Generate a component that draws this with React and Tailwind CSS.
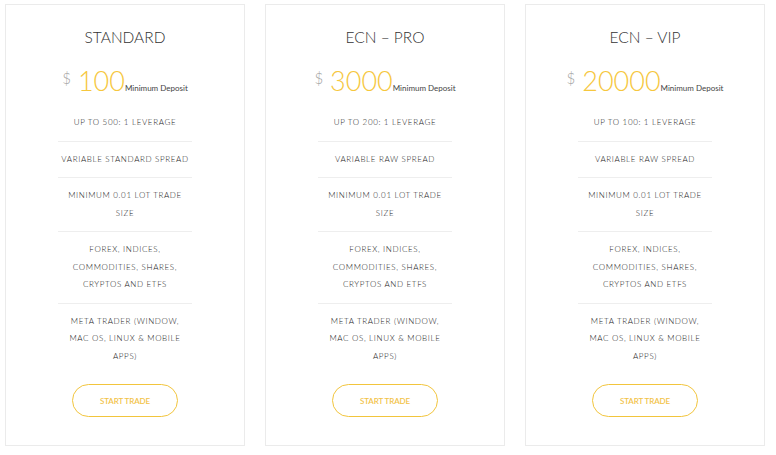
import React from "react";

const plans = [
  {
    name: "STANDARD",
    amount: "100",
    features: [
      ["UP TO 500: 1 LEVERAGE"],
      ["VARIABLE STANDARD SPREAD"],
      ["MINIMUM 0.01 LOT TRADE", "SIZE"],
      ["FOREX, INDICES,", "COMMODITIES, SHARES,", "CRYPTOS AND ETFS"],
      ["META TRADER (WINDOW,", "MAC OS, LINUX & MOBILE", "APPS)"],
    ],
  },
  {
    name: "ECN – PRO",
    amount: "3000",
    features: [
      ["UP TO 200: 1 LEVERAGE"],
      ["VARIABLE RAW SPREAD"],
      ["MINIMUM 0.01 LOT TRADE", "SIZE"],
      ["FOREX, INDICES,", "COMMODITIES, SHARES,", "CRYPTOS AND ETFS"],
      ["META TRADER (WINDOW,", "MAC OS, LINUX & MOBILE", "APPS)"],
    ],
  },
  {
    name: "ECN – VIP",
    amount: "20000",
    features: [
      ["UP TO 100: 1 LEVERAGE"],
      ["VARIABLE RAW SPREAD"],
      ["MINIMUM 0.01 LOT TRADE", "SIZE"],
      ["FOREX, INDICES,", "COMMODITIES, SHARES,", "CRYPTOS AND ETFS"],
      ["META TRADER (WINDOW,", "MAC OS, LINUX & MOBILE", "APPS)"],
    ],
  },
];

const PlanCard = ({ plan }) => {
  return (
    <div className="w-[240px] h-[442px] border border-[#ebebeb] bg-white flex flex-col items-center pt-[22px]">
      <h3 className="text-[15.5px] leading-[20px] font-light text-[#333]">
        {plan.name}
      </h3>

      {/* price */}
      <div className="mt-[19px] flex items-baseline">
        <span className="self-start mt-[3px] mr-[7px] text-[15px] leading-[18px] font-light text-[#a5a5a5]">
          $
        </span>
        <span className="text-[27px] leading-[30px] font-light text-[#f6c73e]">
          {plan.amount}
        </span>
        <span className="text-[8px] leading-[10px] text-[#444]">
          Minimum Deposit
        </span>
      </div>

      <ul className="mt-[9px] w-[134px] divide-y divide-[#eeeeee]">
        {plan.features.map((lines, i) => (
          <li
            key={i}
            className="py-[9px] text-center text-[8px] leading-[17.5px] tracking-[0.65px] font-light text-[#222]"
          >
            {lines.map((line, j) => (
              <div key={j}>{line}</div>
            ))}
          </li>
        ))}
      </ul>

      <button className="mt-[10px] w-[106px] h-[33px] rounded-full border border-[#f2c53d] text-[8px] font-semibold text-[#f2c34a] tracking-[-0.1px]">
        START TRADE
      </button>
    </div>
  );
};

export default function App() {
  return (
    <div
      className="w-[776px] h-[455px] bg-white flex gap-[20px] pl-[5px] pt-[4px]"
      style={{ fontFamily: "Lato, 'Open Sans', sans-serif" }}
    >
      {plans.map((plan) => (
        <PlanCard key={plan.name} plan={plan} />
      ))}
    </div>
  );
}
